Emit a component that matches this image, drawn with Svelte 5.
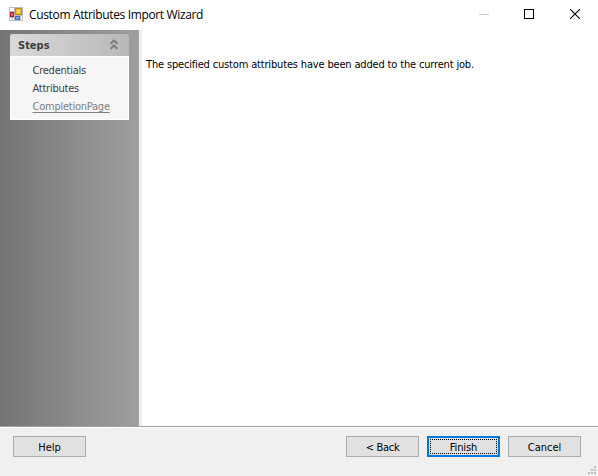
<script>
  const steps = ['Credentials', 'Attributes', 'CompletionPage'];
</script>

<div class="window">
  <header class="titlebar">
    <svg class="app-icon" width="14" height="14" viewBox="0 0 14 14" shape-rendering="crispEdges">
      <rect width="14" height="14" fill="#bdbdbd" />
      <rect x="1" y="1" width="4" height="3" fill="#fff" />
      <rect x="1" y="11" width="2" height="2" fill="#fff" />
      <rect x="4" y="11" width="1" height="2" fill="#fff" />
      <rect x="12" y="9" width="1" height="4" fill="#fff" />
      <rect x="6" y="1" width="7" height="7" fill="#c08a0c" />
      <rect x="7" y="2" width="5" height="5" fill="#f5bd35" />
      <rect x="8" y="3" width="3" height="3" fill="#ffd876" />
      <rect x="1" y="5" width="4" height="5" fill="#b31b1b" />
      <rect x="2" y="6" width="2" height="3" fill="#e8645c" />
      <rect x="6" y="9" width="5" height="4" fill="#3d6fd0" />
      <rect x="7" y="10" width="3" height="2" fill="#77a4ee" />
    </svg>
    <h1>Custom Attributes Import Wizard</h1>
    <div class="controls">
      <svg class="min" width="10" height="10"><path d="M0 5.5h10" stroke="#ccc" /></svg>
      <svg width="10" height="10"><rect x=".5" y=".5" width="9" height="9" fill="none" stroke="#000" /></svg>
      <svg width="10" height="10"><path d="M0 0l10 10M10 0L0 10" stroke="#000" stroke-width="1.1" /></svg>
    </div>
  </header>

  <main>
    <aside>
      <section class="panel">
        <div class="panel-head">
          <h2>Steps</h2>
          <svg width="8" height="11" viewBox="0 0 8 11" fill="none" stroke="#7a7a7a" stroke-width="2">
            <path d="M.6 4.9L4 1.5l3.4 3.4M.6 9.9L4 6.5l3.4 3.4" />
          </svg>
        </div>
        <ul>
          {#each steps as step, i}
            <li class:current={i === 2}>{step}</li>
          {/each}
        </ul>
      </section>
    </aside>
    <div class="content"><p>The specified custom attributes have been added to the current job.</p></div>
  </main>

  <footer>
    <button class="help">Help</button>
    <button class="back">&lt; Back</button>
    <button class="finish"><span>Finish</span></button>
    <button class="cancel">Cancel</button>
    <svg class="grip" width="8" height="8" fill="#bfbfbf" shape-rendering="crispEdges">
      <path d="M6 0h2v2h-2zM3 3h2v2h-2zM6 3h2v2h-2zM0 6h2v2h-2zM3 6h2v2h-2zM6 6h2v2h-2z" />
    </svg>
  </footer>
</div>

<style>
  :global(body) { overflow: hidden; background: #fff; }
  * { box-sizing: border-box; }
  .window {
    width: 598px; height: 476px; display: flex; flex-direction: column;
    font: 11px/18px "DejaVu Sans Condensed", "DejaVu Sans", sans-serif;
    color: #000; background: #fff; white-space: nowrap;
  }
  h1, h2, p, ul { margin: 0; padding: 0; }
  svg { display: block; flex: none; }
  .titlebar { height: 30px; display: flex; align-items: flex-start; padding: 7px 18px 0 9px; }
  h1 { margin-left: 6px; font: 12px/16px "Open Sans", sans-serif; letter-spacing: -0.35px; }
  .controls { display: flex; gap: 36px; margin: 2px 0 0 auto; }
  .min { margin-right: -1px; }
  main { height: 396px; display: flex; }
  aside {
    width: 142px; padding: 4px 0 0 10px; border-right: 3px solid #f0f0f0;
    background: linear-gradient(90deg, #747474, #9f9f9f);
  }
  .panel { width: 119px; }
  .panel-head {
    height: 22px; display: flex; align-items: center; justify-content: space-between;
    padding: 0 11px 1px 8px; border-radius: 2px 2px 0 0;
    background: linear-gradient(90deg, #d9d9d9, #b8b8b8);
  }
  h2 { font: bold 11px/20px "DejaVu Sans Condensed", sans-serif; color: #3f3d3d; padding-top: 2px; }
  ul { height: 64px; list-style: none; padding: 5px 0 0 21.5px; background: #f6f6f6; border: 1px solid #fff; letter-spacing: -0.24px; }
  li { width: max-content; height: 18px; color: #3f3d3d; }
  .current { color: #808080; text-decoration: underline; text-underline-offset: 2px; }
  .content { flex: 1; padding: 26px 0 0 4px; letter-spacing: -0.165px; }
  footer {
    flex: 1; display: flex; align-items: flex-start; padding: 8px 2px 0 13px;
    background: #f0f0f0; border-top: 1px solid #a0a0a0; box-shadow: inset 0 1px #fff;
  }
  button {
    width: 73px; height: 21px; margin: 1px 0 0 8px; padding: 2px 0 0; border: 1px solid #adadad;
    background: #e1e1e1; color: #000; font: inherit; line-height: 17px;
  }
  .help { margin-left: 0; }
  .back { margin-left: 260px; letter-spacing: -0.3px; }
  .finish { border: 2px solid #0078d7; padding: 0 1px; letter-spacing: -0.1px; }
  .finish span { display: block; height: 15px; line-height: 15px; border: 1px dotted #000; }
  .grip { margin: 31px 0 0 auto; }
</style>
